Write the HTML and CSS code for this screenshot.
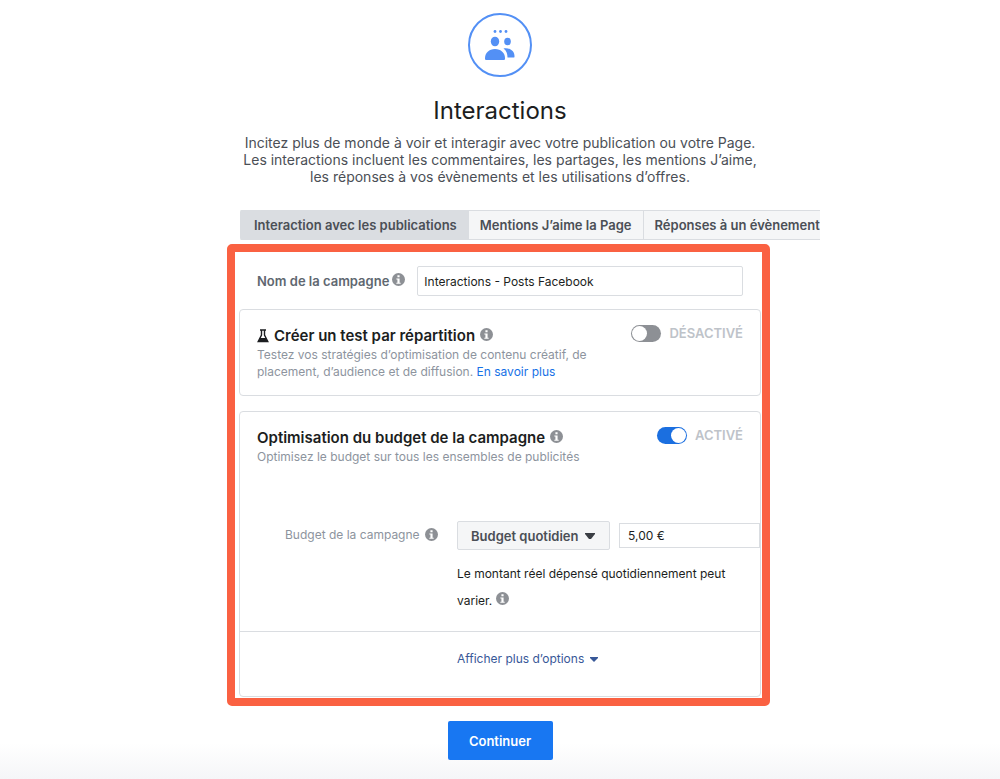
FILE: index.html
```html
<!DOCTYPE html>
<html lang="fr">
<head>
  <meta charset="UTF-8">
  <meta name="viewport" content="width=device-width, initial-scale=1">
  <title>Interactions</title>
  <link rel="stylesheet" href="styles.css">
</head>
<body>
  <svg class="sprite" aria-hidden="true">
    <symbol id="info" viewBox="0 0 12 12">
      <circle cx="6" cy="6" r="6" fill="#8d9095"/>
      <path d="M5 2h2v2H5zM4 5h3v4h1v1H4V9h1V6H4z" fill="#fff"/>
    </symbol>
  </svg>

  <main class="page">
    <header class="intro">
      <svg class="intro-icon" viewBox="0 0 64 64" aria-hidden="true">
        <circle cx="32" cy="32" r="31" fill="none" stroke="#5390f5" stroke-width="2"/>
        <g fill="#5390f5">
          <circle cx="27" cy="18.500" r="1.400"/>
          <circle cx="32.500" cy="18.500" r="1.400"/>
          <circle cx="38" cy="18.500" r="1.400"/>
          <ellipse cx="27" cy="28.500" rx="4.200" ry="4.800"/>
          <ellipse cx="39.500" cy="28.500" rx="3.300" ry="3.800"/>
          <path d="M18 47c-1 0-1-1-1-2 0-5 4-9 10-9s10 4 10 9c0 1 0 2-1 2z"/>
          <path d="M35.500 35.500c6-1 11 2 11 7.500 0 1 0 1.500-1 1.500h-6c0-3.500-1-7-4-9z"/>
        </g>
      </svg>
      <h1>Interactions</h1>
      <p>Incitez plus de monde à voir et interagir avec votre publication ou votre Page. Les interactions incluent les commentaires, les partages, les mentions J’aime, les réponses à vos évènements et les utilisations d’offres.</p>
    </header>

    <nav class="tabs">
      <button type="button" class="tab active">Interaction avec les publications</button>
      <button type="button" class="tab">Mentions J’aime la Page</button>
      <button type="button" class="tab">Réponses à un évènement</button>
    </nav>

    <form class="form">
      <div class="frame">
        <div class="name-row">
          <label for="name">Nom de la campagne</label>
          <svg class="info"><use href="#info"/></svg>
          <input type="text" id="name" value="Interactions - Posts Facebook">
        </div>

        <section class="card split-test">
          <div class="card-head">
            <h2>
              <svg class="flask" viewBox="0 0 12 14" aria-hidden="true">
                <path d="M3 1h6M4.500 1v5L1.200 12.500h9.600L7.500 6V1" fill="none" stroke="#1c1e21" stroke-width="1.400"/>
                <path d="M3 9h6l2 4H1z" fill="#1c1e21"/>
              </svg>
              Créer un test par répartition
              <svg class="info"><use href="#info"/></svg>
            </h2>
            <div class="toggle">
              <input type="checkbox" role="switch" id="split">
              <label for="split">DÉSACTIVÉ</label>
            </div>
          </div>
          <p class="hint">Testez vos stratégies d’optimisation de contenu créatif, de placement, d’audience et de diffusion. <a href="#">En savoir plus</a></p>
        </section>

        <section class="card">
          <div class="budget-intro">
            <div class="card-head">
              <h2>
                Optimisation du budget de la campagne
                <svg class="info"><use href="#info"/></svg>
              </h2>
              <div class="toggle">
                <input type="checkbox" role="switch" id="optim" checked>
                <label for="optim">ACTIVÉ</label>
              </div>
            </div>
            <p class="hint">Optimisez le budget sur tous les ensembles de publicités</p>
          </div>

          <div class="budget">
            <div class="budget-label">
              <label for="amount">Budget de la campagne</label>
              <svg class="info"><use href="#info"/></svg>
            </div>
            <div class="budget-fields">
              <div class="select">
                <select aria-label="Type de budget">
                  <option>Budget quotidien</option>
                  <option>Budget global</option>
                </select>
                <svg class="caret" viewBox="0 0 10 6" aria-hidden="true"><path d="M0 0h10v1L6 6H4L0 1z" fill="#3b3e44"/></svg>
              </div>
              <input type="text" id="amount" value="5,00 €">
            </div>
            <p class="budget-note">Le montant réel dépensé quotidiennement peut varier. <svg class="info"><use href="#info"/></svg></p>
          </div>

          <div class="more">
            <a href="#">Afficher plus d’options <svg class="caret-small" viewBox="0 0 8 5" aria-hidden="true"><path d="M0 0h8v1L4 5 0 1z" fill="#385898"/></svg></a>
          </div>
        </section>
      </div>

      <button type="submit" class="continue">Continuer</button>
    </form>
  </main>
</body>
</html>
```
FILE: styles.css
```css
* { box-sizing: border-box; }
body { margin: 0; min-height: 100vh; font-family: Inter, "Liberation Sans", sans-serif; font-size: 12px; color: #1c1e21; background: linear-gradient(to top, #f5f6f8, #fff 36px); }
h1, h2, p { margin: 0; }
a { color: #1771e6; text-decoration: none; }
input, select, button { font-family: inherit; font-size: 12px; color: #1c1e21; }
.sprite { display: none; }

.page { max-width: 546px; margin: 0 auto; padding: 13px 0 19px; }

.intro { text-align: center; }
.intro-icon { display: block; width: 64px; height: 64px; margin: 0 auto 18px; }
.intro h1 { font-size: 24px; line-height: 32px; font-weight: 400; }
.intro p { max-width: 520px; margin: 7px auto 0; font-size: 14px; line-height: 17px; color: #4b4f56; }

.tabs { display: flex; margin: 25px -47px 0 13px; overflow: hidden; border-radius: 2px 0 0 2px; }
.tab { flex: none; height: 30px; padding: 0 11px; border: 1px solid #dadde1; border-left-width: 0; background: #f5f6f7; font-size: 13px; font-weight: 600; color: #4b4f56; cursor: pointer; }
.tab.active { padding-left: 14px; background: #dadde1; }

.frame { margin: 4px 3px 0 0; padding: 14px 1px 1px 4px; border: 8px solid #fa6142; border-radius: 5px; }
.info { width: 13px; height: 13px; flex: none; }

.name-row { display: flex; align-items: center; padding: 0 18px; margin-bottom: 13px; }
.name-row label { font-size: 13px; font-weight: 600; color: #606770; }
.name-row .info { margin: 0 12px 4px 3px; }
.name-row input { flex: 1; min-width: 0; height: 30px; padding: 0 6px; border: 1px solid #dadde1; border-radius: 2px; background: #fff; }

.card { border: 1px solid #dadde1; border-radius: 4px; overflow: hidden; background: #fff; }
.card + .card { margin-top: 15px; }
.split-test { padding: 15px 17px; }
.card-head { display: flex; justify-content: space-between; align-items: flex-start; }
.card h2 { display: flex; align-items: center; gap: 5px; padding-top: 1px; font-size: 15px; line-height: 20px; font-weight: 600; }
.card h2 .info { margin-bottom: 4px; }
.flask { width: 12px; height: 14px; }
.hint { max-width: 360px; line-height: 17px; color: #8d949e; }

.toggle { display: flex; align-items: center; gap: 8px; }
.toggle label { font-size: 13px; line-height: 17px; font-weight: 600; color: #bec3c9; }
.toggle input { appearance: none; width: 30px; height: 17px; margin: 0; border-radius: 9px; background: #8d9095; cursor: pointer; }
.toggle input::before { content: ""; display: block; width: 15px; height: 15px; margin: 1px; border-radius: 50%; background: #fff; }
.toggle input:checked { background: #1b6fe0; }
.toggle input:checked::before { margin-left: 14px; }

.budget-intro { padding: 15px 17px 0; }
.budget { display: grid; grid-template-columns: 217px 1fr; padding: 56px 0 17px; }
.budget-label { display: flex; align-items: center; gap: 5px; height: 26px; padding-left: 45px; color: #8d949e; }
.budget-fields { display: flex; align-items: center; gap: 9px; min-width: 0; }
.select { display: grid; align-items: center; width: 153px; }
.select select { grid-area: 1 / 1; appearance: none; height: 29px; padding: 0 13px; border: 1px solid #dadde1; border-radius: 2px; background: #f5f6f7; font-size: 13px; font-weight: 600; color: #4b4f56; }
.caret { grid-area: 1 / 1; justify-self: end; width: 10px; height: 6px; margin-right: 15px; pointer-events: none; }
.budget-fields input { flex: 1; min-width: 0; height: 25px; padding: 0 8px; border: 1px solid #dadde1; background: #fff; }
.budget-note { grid-column: 2; max-width: 290px; margin-top: 10px; line-height: 27px; }

.more { padding: 18px 17px 28px 217px; border-top: 1px solid #dadde1; line-height: 18px; }
.more a { color: #385898; }
.caret-small { width: 8px; height: 5px; margin-left: 2px; vertical-align: middle; }

.continue { display: block; width: 105px; height: 39px; margin: 15px auto 0; border: 0; border-radius: 2px; background: #1877f2; font-size: 13px; font-weight: 600; color: #fff; cursor: pointer; }
```
